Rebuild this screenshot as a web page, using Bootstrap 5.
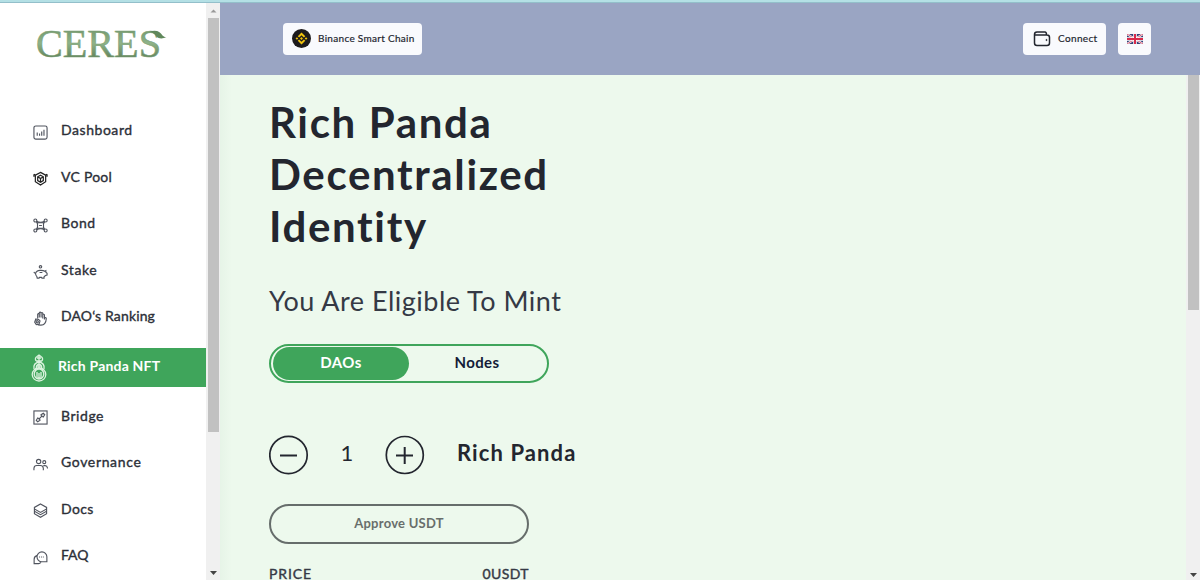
<!DOCTYPE html>
<html lang="en">
<head>
<meta charset="utf-8">
<meta name="viewport" content="width=device-width, initial-scale=1">
<title>Ceres DAO</title>
<link href="https://cdn.jsdelivr.net/npm/bootstrap@5.3.0/dist/css/bootstrap.min.css" rel="stylesheet">
<style>
body{font-family:Lato,"Open Sans",sans-serif;color:#23262f;background:#fff;height:100vh}
.topline{height:3px;background:#b4e0e5;border-bottom:1px solid #93bfca}
.side{width:206px}
.logo{margin:18px 0 0 35px;height:50px}
.menu{margin-top:36px}
.menu a{height:46.5px;padding-left:33px;color:#2c2f38;text-decoration:none;font-size:14px;font-weight:400;letter-spacing:.55px;-webkit-text-stroke:.35px #2c2f38}
.menu a svg{width:15px;height:15px;margin:4px 13px 0 0;fill:none;stroke:#50545e;stroke-width:1.2;flex:none}
.menu a.on{height:39px;margin:8px 0 6px;background:#3fa55b;color:#fff;font-weight:700;padding-left:31px;letter-spacing:.2px;-webkit-text-stroke:0}
.menu a.on svg{width:16px;height:28px;margin:1px 11px 0 0;stroke:#dcf3df;stroke-width:1.300}
.menu a span{line-height:20px}
.menu a.on span{margin-top:-3px}
.bar{width:14px;background:#f0f0f0;padding:0 1px 0 2px}
.bar i{display:block;background:#c1c1c1}
.bar svg{display:block;width:11px;height:12px}
.head{height:72px;background:#9aa5c3;padding:0 49px 1px 63px}
.chip{height:32px;background:#f9fafd;border-radius:4px;font-size:10px;font-weight:400;color:#23262f;-webkit-text-stroke:.2px #23262f}
.page{background:linear-gradient(90deg,#e6f4e7,#edf9ed 12px,#edf9ed);padding:21px 0 0 49px}
h1{font-size:42px;line-height:52px;font-weight:700;letter-spacing:1.65px;width:300px;margin:0 0 31px;color:#23262f}
h2{font-size:27px;line-height:36px;font-weight:400;letter-spacing:.5px;margin:0;color:#353945}
.tabs{width:280px;height:39px;border:2px solid #3fa55b;border-radius:20px;margin-top:25px;padding:1px 2px;font-size:15px;font-weight:700;letter-spacing:.4px;color:#141c38}
.tabs span{margin-top:-3px}
.tabs .sel{background:#3fa55b;color:#fff;border-radius:17px}
.qty{margin-top:52px;height:40px}
.round{width:40px;height:40px}
.approve{width:260px;height:40px;border:2px solid #666d6b;border-radius:20px;margin-top:29px;font-size:13px;font-weight:700;color:#686e6b;letter-spacing:.25px}
.price{width:260px;margin-top:22px;font-size:14px;line-height:16px;font-weight:400;color:#353945;letter-spacing:.9px;-webkit-text-stroke:.4px #353945}
</style>
</head>
<body class="d-flex flex-column overflow-hidden">
<div class="topline flex-shrink-0"></div>
<div class="d-flex flex-grow-1 overflow-hidden">
 <aside class="side flex-shrink-0">
  <svg class="logo d-block overflow-visible" width="135" height="50" viewBox="0 -6 135 50">
   <defs><linearGradient id="g" x2="0" y2="1"><stop stop-color="#64895f"/><stop offset=".5" stop-color="#8fb388"/><stop offset="1" stop-color="#4d6e47"/></linearGradient></defs>
   <text x="1" y="29.500" font-family="Liberation Serif,serif" font-size="39" textLength="125" lengthAdjust="spacingAndGlyphs" fill="url(#g)" stroke="#7c9f76" stroke-width=".6">CERES</text>
   <path d="M115 4.500c6-2 10 0 12.500 4q2.500 2.500 4.500 1.500q-7 3-10.500-.5q-3-4-6.500-5z" fill="#60885b"/>
  </svg>
  <nav class="menu d-flex flex-column">
   <a href="#" class="d-flex align-items-center"><svg viewBox="0 0 16 16"><rect x="1" y="1" width="14" height="14" rx="2"/><path d="M4.500 11.500V8M7 11.500V9M9.300 11.500V7M11.700 11.500V5"/></svg><span>Dashboard</span></a>
   <a href="#" class="d-flex align-items-center"><svg viewBox="0 0 16 16" style="stroke:#222"><path d="M8 1.500l5.500 3v7L8 15l-5.500-3.500v-7zM8 4.500l3 1.700v4L8 12l-3-1.800v-4zM5 6.200l3 1.800 3-1.800M8 8v4M1 3.500l2 1M15 3.500l-2 1M1 6V3.500M15 6V3.500M7 14.500h2" stroke-width="1.300"/></svg><span style="letter-spacing:.25px">VC Pool</span></a>
   <a href="#" class="d-flex align-items-center"><svg viewBox="0 0 16 16"><circle cx="2.500" cy="2.700" r="1.600"/><circle cx="13.500" cy="2.700" r="1.600"/><circle cx="2.500" cy="13.300" r="1.600"/><circle cx="13.500" cy="13.300" r="1.600"/><rect x="4.800" y="5" width="6.400" height="6"/><path d="M4 3.500q4 2 8 0M4 12.500q4-2 8 0M3.500 4l1.300 2M12.500 4l-1.300 2M3.500 12l1.300-2M12.500 12l-1.300-2M6.500 8h3"/></svg><span>Bond</span></a>
   <a href="#" class="d-flex align-items-center"><svg viewBox="0 0 16 16"><circle cx="8" cy="3" r="1.300"/><path d="M1 8.500q.3 1.500 1.800 1.300Q3.500 7 7.500 6.800q3.500-.2 5 1l1.200-.6v1.600l1.300 1v2l-1.700.5-1.500 1.300v1.400H9.500l-.5-.8H7l-.5.8H4.500l-.4-1.600Q2.700 12 2.700 9.800M7 9h3"/></svg><span>Stake</span></a>
   <a href="#" class="d-flex align-items-center"><svg viewBox="0 0 16 16"><path d="M5 8V3.500q.8-1.500 1.700 0V7 2q.9-1.500 1.900 0v5V2.300q.9-1.300 1.800 0V8 4q.9-1.200 1.800 0v5l.3-1.500q1.300-1.300 1.700.5-.4 7-5.700 7-3.500 0-4-1M3 8.500l3 .5 1.500 1.500-1 3.500-3 .5L1.800 12z"/><circle cx="4.500" cy="11.500" r="1.200"/></svg><span style="letter-spacing:.14px">DAO‘s Ranking</span></a>
   <a href="#" class="on d-flex align-items-center"><svg viewBox="0 0 16 28"><path d="M5 7q-1.500-3 1-4.500L8 1l2 1.500Q12.500 4 11 7M5 7h6M6 4h4M8 1v6M3 15Q2 9 8 8q6 1 5 7M5.500 15q-1-4 2.500-5 3.500 1 2.500 5M5.500 12h5M8 8v6"/><ellipse cx="8" cy="20.500" rx="6.800" ry="6.500"/><ellipse cx="8" cy="20" rx="4.800" ry="5"/><path d="M3 16q5-4 10 0M6 18v5M10 18v5M8 19v5M5.500 24h5"/></svg><span>Rich Panda NFT</span></a>
   <a href="#" class="d-flex align-items-center"><svg viewBox="0 0 16 16"><rect x="1" y="1" width="14" height="14"/><path d="M6 10l4-4M9 6.500L8.500 5 11 3.500l1.500 1.500L11 7.500zM7 9.500L7.500 11 5 12.500 3.500 11 5 8.500z"/></svg><span>Bridge</span></a>
   <a href="#" class="d-flex align-items-center"><svg viewBox="0 0 16 16"><circle cx="6" cy="4.800" r="2.300"/><circle cx="12" cy="5.500" r="1.600"/><path d="M1 14v-2q.3-3 3-3h4q2.700 0 3 3v2M11 9.200h2q2.300 0 2.500 3"/></svg><span style="letter-spacing:.65px">Governance</span></a>
   <a href="#" class="d-flex align-items-center"><svg viewBox="0 0 16 16"><path d="M8 1l6.500 3.700v1.600L8 10 1.500 6.300V4.700zM1.500 6.500v2.300L8 12.500l6.500-3.700V6.500M1.500 9v2.500L8 15.200l6.500-3.700V9"/></svg><span style="letter-spacing:.35px">Docs</span></a>
   <a href="#" class="d-flex align-items-center"><svg viewBox="0 0 16 16"><path d="M9.500 2a5.300 5.300 0 0 1 5.300 5.300V12.500H9.500a5.250 5.250 0 0 1 0-10.500zM4 6q-2.800 1-2.800 4v4.500H6q1.500 0 2.500-1.500"/><path d="M6.500 7.500h6" stroke-dasharray="1 1"/></svg><span style="letter-spacing:0">FAQ</span></a>
  </nav>
 </aside>
 <div class="bar d-flex flex-column flex-shrink-0">
  <svg viewBox="0 0 11 12" style="height:15px"><path d="M2.500 8l3-3 3 3z" fill="#999"/></svg>
  <i style="height:414px"></i>
  <svg class="mt-auto" viewBox="0 0 11 12"><path d="M2 3l3.500 4L9 3z" fill="#444"/></svg>
 </div>
 <div class="d-flex flex-column flex-grow-1">
  <header class="head d-flex align-items-center flex-shrink-0">
   <div class="chip d-flex align-items-center" style="width:139px;padding-left:9px">
    <svg width="19" height="19" viewBox="0 0 32 32" class="flex-shrink-0" style="margin-right:7px"><circle cx="16" cy="16" r="16" fill="#1d1b1c"/><path fill="#f0c30c" d="M12 14.400L16 10.500l4 4 2.400-2.400L16 6l-6.300 6.200zM6 16l2.300-2.300 2.300 2.300-2.300 2.300zm6 1.600l4 4 4-4 2.400 2.300L16 26l-6.300-6.200zM21.400 16l2.300-2.300L26 16l-2.300 2.300zM13.500 16l2.500-2.400 2.400 2.400-2.400 2.400z"/></svg>
    <span class="text-nowrap" style="letter-spacing:.3px">Binance Smart Chain</span>
   </div>
   <div class="chip d-flex align-items-center ms-auto" style="width:83px;padding-left:10px">
    <svg width="18" height="18" viewBox="0 0 18 18" fill="none" stroke="#23262f" stroke-width="1.500" style="margin-right:7px"><path d="M1.500 4.500q0-2.500 2.500-2.500h8q1.500 0 1.500 3M1.500 4.500V13q0 2.500 2.500 2.500h10q2.500 0 2.500-2.500V7.500Q16.500 5 14 5H3Q1.500 5 1.500 4"/><circle cx="13.500" cy="10" r=".6" fill="#23262f" stroke-width=".8"/></svg>
    <span style="letter-spacing:.35px">Connect</span>
   </div>
   <div class="chip d-flex align-items-center justify-content-center" style="width:33px;margin-left:12px">
    <svg width="16" height="10" viewBox="0 0 16 10"><path fill="#354077" d="M0 0h16v10H0z"/><path d="M0 0l16 10M16 0L0 10" stroke="#fff" stroke-width="2"/><path d="M0 0l16 10M16 0L0 10" stroke="#cf3150" stroke-width=".8"/><path d="M8 0v10M0 5h16" stroke="#fff" stroke-width="3.500"/><path d="M8 0v10M0 5h16" stroke="#d82a4b" stroke-width="2"/></svg>
   </div>
  </header>
  <div class="d-flex flex-grow-1">
   <main class="page flex-grow-1">
    <h1>Rich Panda Decentralized Identity</h1>
    <h2>You Are Eligible To Mint</h2>
    <div class="tabs d-flex">
     <div class="sel d-flex align-items-center justify-content-center" style="width:136px"><span>DAOs</span></div>
     <div class="d-flex align-items-center justify-content-center flex-grow-1"><span>Nodes</span></div>
    </div>
    <div class="qty d-flex align-items-center">
     <svg class="round" viewBox="0 0 40 40" fill="none" stroke="#23262f"><circle cx="19.500" cy="20" r="18.700" stroke-width="1.700"/><path d="M11 20.500h17" stroke-width="2"/></svg>
     <span class="text-center" style="width:76px;font-size:22px;margin-top:-5px">1</span>
     <svg class="round" viewBox="0 0 40 40" fill="none" stroke="#23262f"><circle cx="19.800" cy="20" r="18.500" stroke-width="1.700"/><path d="M11 20.500h17M19.700 12v17" stroke-width="2"/></svg>
     <b class="fw-bold" style="margin:-5px 0 0 32px;font-size:22px;letter-spacing:1.100px">Rich Panda</b>
    </div>
    <div class="approve d-flex align-items-center justify-content-center"><span style="margin-top:-1px">Approve USDT</span></div>
    <div class="price d-flex justify-content-between"><span>PRICE</span><span style="letter-spacing:.4px">0USDT</span></div>
   </main>
   <div class="bar d-flex flex-column flex-shrink-0">
    <i style="height:235px"></i>
    <svg class="mt-auto" viewBox="0 0 11 12"><path d="M2 3l3.500 4L9 3z" fill="#444"/></svg>
   </div>
  </div>
 </div>
</div>
<script src="https://cdn.jsdelivr.net/npm/bootstrap@5.3.0/dist/js/bootstrap.bundle.min.js"></script>
</body>
</html>
